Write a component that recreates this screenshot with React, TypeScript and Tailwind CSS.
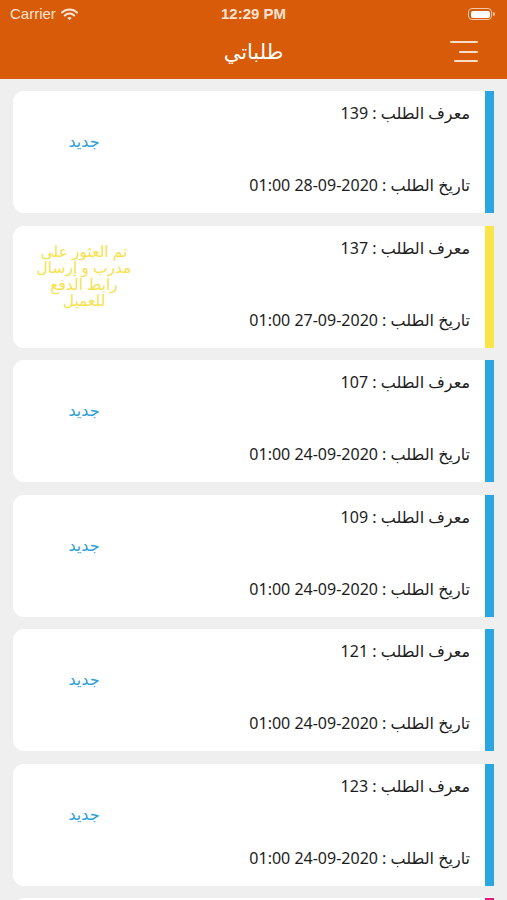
import React from "react";

type Order = {
  id: string;
  date: string;
  status: string;
  tone: "blue" | "yellow" | "pink";
};

// date strings are kept in the order the app shows them (time first)
const orders: Order[] = [
  { id: "139", date: "01:00 28-09-2020", status: "جديد", tone: "blue" },
  { id: "137", date: "01:00 27-09-2020", status: "تم العثور على مدرب و إرسال رابط الدفع للعميل", tone: "yellow" },
  { id: "107", date: "01:00 24-09-2020", status: "جديد", tone: "blue" },
  { id: "109", date: "01:00 24-09-2020", status: "جديد", tone: "blue" },
  { id: "121", date: "01:00 24-09-2020", status: "جديد", tone: "blue" },
  { id: "123", date: "01:00 24-09-2020", status: "جديد", tone: "blue" },
  { id: "125", date: "01:00 24-09-2020", status: "جديد", tone: "pink" },
];

export default function App() {
  return (
    <div
      className="w-[507px] h-[900px] overflow-hidden bg-[#efefef] flex flex-col"
      style={{ fontFamily: '"Noto Sans", "DejaVu Sans", sans-serif' }}
    >
      <header className="bg-[#d75b08] shrink-0">
        <StatusBar />
        <NavBar />
      </header>

      <main className="flex flex-col gap-[12.5px] px-[13px] pt-[12px]">
        {orders.map((o) => (
          <OrderCard key={o.id} order={o} />
        ))}
      </main>
    </div>
  );
}

function StatusBar() {
  return (
    <div className="h-[28px] relative flex items-center px-[10px] text-[#fbe3d3]">
      <div className="flex items-center gap-[5px]">
        <span className="text-[15px] font-medium" style={{ fontFamily: '"Liberation Sans", sans-serif' }}>
          Carrier
        </span>
        <svg width="17" height="13" viewBox="0 0 17 13" fill="none">
          <path d="M1 4.6a10.6 10.6 0 0 1 15 0" stroke="currentColor" strokeWidth="2.1" strokeLinecap="round" />
          <path d="M3.8 7.4a6.6 6.6 0 0 1 9.4 0" stroke="currentColor" strokeWidth="2.1" strokeLinecap="round" />
          <path d="M8.5 12.2 6.4 10.1a3 3 0 0 1 4.2 0z" fill="currentColor" />
        </svg>
      </div>
      <div
        className="absolute left-0 right-0 text-center text-[15px] font-bold pointer-events-none"
        style={{ fontFamily: '"Liberation Sans", sans-serif' }}
      >
        12:29 PM
      </div>
      <div className="ml-auto flex items-center mr-[2px]">
        <div className="w-[24px] h-[12px] rounded-[4px] border border-[#f3c9a9] p-[1.5px]">
          <div className="w-full h-full rounded-[2px] bg-white" />
        </div>
        <div className="w-[2px] h-[4px] rounded-r-sm bg-[#f3c9a9] ml-[1px]" />
      </div>
    </div>
  );
}

function NavBar() {
  return (
    <div className="h-[51px] relative flex items-center justify-center">
      <h1 className="text-white text-[21px] leading-none pb-[4px]" dir="rtl">
        طلباتي
      </h1>
      <button className="absolute right-[29px] top-[13px] w-[28px] h-[21px] flex flex-col justify-between items-end">
        <span className="block h-[2px] w-[28px] bg-[#fbdcc4] rounded-full" />
        <span className="block h-[2px] w-[19px] bg-[#fbdcc4] rounded-full" />
        <span className="block h-[2px] w-[24px] bg-[#fbdcc4] rounded-full" />
      </button>
    </div>
  );
}

function OrderCard({ order }: { order: Order }) {
  const bar =
    order.tone === "yellow" ? "bg-[#f8e548]" : order.tone === "pink" ? "bg-[#e5187b]" : "bg-[#2aa7e1]";
  const statusColor =
    order.tone === "yellow"
      ? "text-[#f6e24c] w-[104px] text-[15.5px] leading-[16.5px] font-medium"
      : "text-[#2f9fd9] text-[16px]";

  return (
    <div className="flex h-[122px] shrink-0">
      <div className="flex-1 bg-white rounded-l-[11px] flex" dir="rtl">
        <div className="flex-1 flex flex-col justify-between pr-[15px] pt-[12px] pb-[18px] text-[16px] leading-[20px] text-[#1c1c1c]">
          <div>معرف الطلب : {order.id}</div>
          <div>
            تاريخ الطلب : <bdi dir="ltr">{order.date}</bdi>
          </div>
        </div>
        <div className="w-[142px] h-[100px] flex items-center justify-center">
          <div className={`text-center ${statusColor}`}>{order.status}</div>
        </div>
      </div>
      <div className={`w-[9px] ${bar}`} />
    </div>
  );
}
